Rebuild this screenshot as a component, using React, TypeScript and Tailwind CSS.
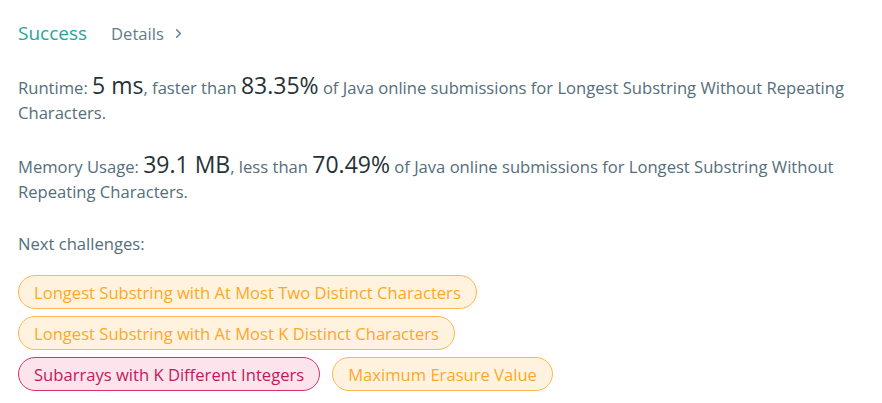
import { ChevronRight } from "lucide-react";

const challenges = [
  { title: "Longest Substring with At Most Two Distinct Characters", hard: false },
  { title: "Longest Substring with At Most K Distinct Characters", hard: false },
  { title: "Subarrays with K Different Integers", hard: true },
  { title: "Maximum Erasure Value", hard: false },
];

export default function App() {
  return (
    <div className="min-h-screen bg-white px-[18px] pt-[20px] text-[16.6px] leading-[25px] text-[#546e7a] font-['Open_Sans',sans-serif]">
      <div className="flex h-[26px] items-center">
        <span className="text-[19px] text-[#26a69a]">Success</span>
        <span className="ml-[24px] flex items-center text-[#607d8b]">
          Details
          <ChevronRight className="ml-[7px] h-[15px] w-[15px]" strokeWidth={2.2} />
        </span>
      </div>

      <p className="mt-[28px]">
        Runtime: <span className="text-[23px] leading-none text-[#263238]">5 ms</span>, faster than{" "}
        <span className="text-[23px] leading-none text-[#263238]">83.35%</span> of Java online submissions for
        Longest Substring Without Repeating Characters.
      </p>

      <p className="mt-[28px]">
        Memory Usage: <span className="text-[23px] leading-none text-[#263238]">39.1 MB</span>, less than{" "}
        <span className="text-[23px] leading-none text-[#263238]">70.49%</span> of Java online submissions for
        Longest Substring Without Repeating Characters.
      </p>

      <p className="mt-[27px]">Next challenges:</p>

      <div className="mt-[19px] flex flex-wrap gap-x-[12px] gap-y-[7px] pr-[300px]">
        {challenges.map((c) => (
          <span
            key={c.title}
            className={
              c.hard
                ? "flex h-[34px] items-center rounded-full border border-[#d6336c] bg-[#fce4ec] px-[15px] text-[#c2185b]"
                : "flex h-[34px] items-center rounded-full border border-[#ffb74d] bg-[#fff3e0] px-[15px] text-[#ffa726]"
            }
          >
            {c.title}
          </span>
        ))}
      </div>
    </div>
  );
}
